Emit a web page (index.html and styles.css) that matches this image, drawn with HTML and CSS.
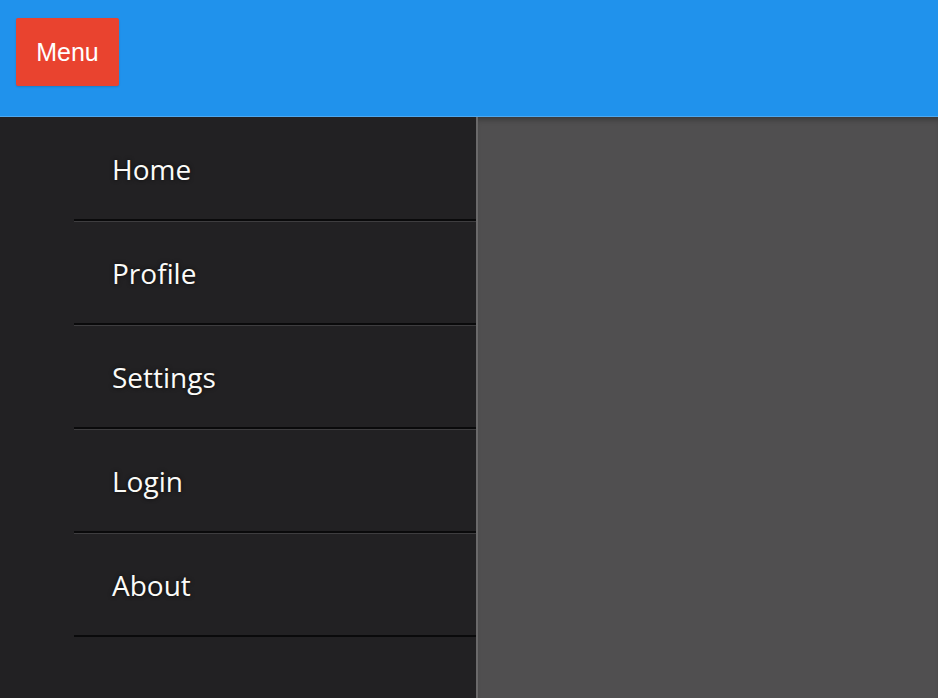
FILE: index.html
```html
<!DOCTYPE html>
<html>
<head>
<meta charset="utf-8">
<link rel="stylesheet" href="styles.css">
</head>
<body>
<header class="topbar">
  <button class="menu-btn">Menu</button>
</header>
<div class="layout">
  <nav class="sidebar">
    <ul class="nav-list">
      <li class="nav-item">Home</li>
      <li class="nav-item">Profile</li>
      <li class="nav-item">Settings</li>
      <li class="nav-item">Login</li>
      <li class="nav-item">About</li>
    </ul>
  </nav>
  <main class="content"></main>
</div>
</body>
</html>
```
FILE: styles.css
```css
html, body {
  margin: 0;
  padding: 0;
  height: 100%;
}
body {
  display: flex;
  flex-direction: column;
  background: #222123;
  font-family: "Open Sans", "DejaVu Sans", sans-serif;
  overflow: hidden;
}
.topbar {
  height: 117px;
  background: #2092ec;
  border-bottom: 1px solid #4ea8f0;
  padding: 18px 0 0 16px;
  box-sizing: border-box;
  flex: none;
}
.menu-btn {
  width: 103px;
  height: 68px;
  background: #e9432f;
  color: #fff;
  border: none;
  border-radius: 2px;
  font-family: "Liberation Sans", Arial, sans-serif;
  font-size: 25px;
  padding: 0;
  box-shadow: 0 1px 2px rgba(0, 0, 0, 0.15);
}
.layout {
  flex: 1;
  display: flex;
  min-height: 0;
}
.sidebar {
  width: 476px;
  flex: none;
  background: #222123;
  padding-left: 74px;
  box-sizing: border-box;
}
.nav-list {
  list-style: none;
  margin: 0;
  padding: 0;
}
.nav-item {
  height: 101px;
  display: flex;
  align-items: center;
  padding-left: 38px;
  color: #fbfbf8;
  font-size: 28px;
  text-shadow: 0 0 4px rgba(0, 0, 0, 0.7);
  border-top: 1px solid #3e3d3f;
  border-bottom: 2px solid #0a0a0b;
}
.nav-item:first-child {
  border-top-color: #222123;
}
.content {
  flex: 1;
  background: #504f50;
  border-left: 2px solid #6a696a;
  box-shadow: inset 0 6px 6px -4px rgba(0, 0, 0, 0.35);
}
```
